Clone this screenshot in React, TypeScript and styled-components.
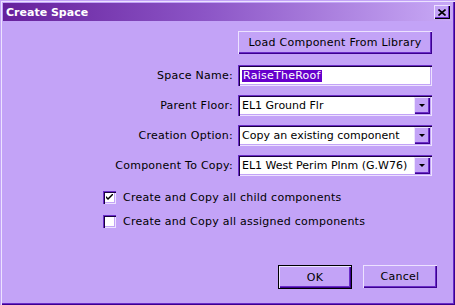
import React from "react";
import styled, { createGlobalStyle } from "styled-components";

const GlobalStyle = createGlobalStyle`
  html, body {
    margin: 0;
    padding: 0;
    background: #c3a3f7;
  }
  * {
    box-sizing: border-box;
  }
`;

const Window = styled.div`
  width: 455px;
  height: 305px;
  background: #c3a3f7;
  display: flex;
  flex-direction: column;
  font-family: "DejaVu Sans", Verdana, sans-serif;
  font-size: 11px;
  letter-spacing: 0.25px;
  color: #000;
  box-shadow: inset 1px 1px #c3a3f7, inset 2px 2px #ece2ff,
    inset -1px -1px #3c0090, inset -2px -2px #6a2cc8;
`;

const TitleBar = styled.div`
  margin: 3px 3px 0 3px;
  height: 18px;
  display: flex;
  align-items: center;
  justify-content: space-between;
  padding: 0 2px 0 3px;
  background: linear-gradient(to right, #66209c, #8c55c6 45%, #c8a9f6);
`;

const Title = styled.span`
  color: #fff;
  font-weight: bold;
  font-size: 11px;
  letter-spacing: 0;
`;

const CloseButton = styled.div`
  width: 16px;
  height: 14px;
  background: #c3a3f7;
  display: flex;
  align-items: center;
  justify-content: center;
  box-shadow: inset 1px 1px #ece2ff, inset -1px -1px #000,
    inset -2px -2px #6a2cc8;
`;

const Body = styled.div`
  flex: 1;
  display: flex;
  flex-direction: column;
  padding: 10px 18px 0 0;
`;

const Form = styled.div`
  display: grid;
  grid-template-columns: 1fr 194px;
  column-gap: 5px;
  row-gap: 9px;
  align-items: center;
  margin-right: 5px;
`;

const Label = styled.label`
  text-align: right;
  white-space: nowrap;
`;

const Button = styled.div<{ $default?: boolean; $width?: number }>`
  height: ${(p) => (p.$default ? 24 : 23)}px;
  width: ${(p) => (p.$width ? `${p.$width}px` : "auto")};
  display: flex;
  align-items: center;
  justify-content: center;
  background: #c3a3f7;
  white-space: nowrap;
  box-shadow: ${(p) =>
    p.$default
      ? "inset 1px 1px #000, inset -1px -1px #000, inset 2px 2px #ece2ff, inset -2px -2px #3c0090, inset -3px -3px #6a2cc8"
      : "inset 1px 1px #ece2ff, inset -1px -1px #3c0090, inset -2px -2px #6a2cc8"};
`;

const LoadButton = styled(Button)`
  grid-column: 2;
  margin-bottom: 2px;
`;

const Sunken = styled.div`
  height: 21px;
  background: #fff;
  display: flex;
  align-items: center;
  box-shadow: inset 1px 1px #6a2cc8, inset 2px 2px #1a0040,
    inset -1px -1px #ece2ff, inset -2px -2px #c3a3f7;
  padding: 0 2px 0 4px;
`;

const Selected = styled.span`
  background: #6600cc;
  color: #fff;
  padding: 0 1px;
  line-height: 12px;
`;

const ComboText = styled.span`
  flex: 1;
  white-space: nowrap;
  overflow: hidden;
  letter-spacing: 0;
`;

const ArrowButton = styled.div`
  width: 16px;
  height: 17px;
  background: #c3a3f7;
  display: flex;
  align-items: center;
  justify-content: center;
  box-shadow: inset 1px 1px #ece2ff, inset -1px -1px #3c0090,
    inset -2px -2px #6a2cc8;
`;

const Arrow = styled.div`
  width: 0;
  height: 0;
  border-left: 3px solid transparent;
  border-right: 3px solid transparent;
  border-top: 3px solid #000;
`;

const Checks = styled.div`
  display: flex;
  flex-direction: column;
  gap: 11px;
  padding-left: 103px;
  margin-top: 15px;
`;

const CheckRow = styled.div`
  display: flex;
  align-items: center;
  gap: 7px;
`;

const Box = styled.div`
  width: 13px;
  height: 13px;
  background: #fff;
  display: flex;
  align-items: center;
  justify-content: center;
  box-shadow: inset 1px 1px #6a2cc8, inset 2px 2px #1a0040,
    inset -1px -1px #ece2ff, inset -2px -2px #c3a3f7;
`;

const Footer = styled.div`
  margin-top: auto;
  margin-bottom: 16px;
  display: flex;
  justify-content: flex-end;
  align-items: flex-start;
  gap: 11px;
`;

const Combo = ({ value }: { value: string }) => (
  <Sunken>
    <ComboText>{value}</ComboText>
    <ArrowButton>
      <Arrow />
    </ArrowButton>
  </Sunken>
);

const Check = ({ checked, label }: { checked?: boolean; label: string }) => (
  <CheckRow>
    <Box>
      {checked && (
        <svg width="7" height="7" viewBox="0 0 7 7">
          <path d="M0 2 L0 4 L2 6 L7 1 L7 -1 L2 4 Z" fill="#000" />
        </svg>
      )}
    </Box>
    <span>{label}</span>
  </CheckRow>
);

export default function App() {
  return (
    <>
      <GlobalStyle />
      <Window>
        <TitleBar>
          <Title>Create Space</Title>
          <CloseButton>
            <svg width="8" height="7" viewBox="0 0 8 7">
              <path d="M0.5 0.5 L7.5 6.5 M7.5 0.5 L0.5 6.5" stroke="#000" strokeWidth="1.6" />
            </svg>
          </CloseButton>
        </TitleBar>
        <Body>
          <Form>
            <LoadButton>Load Component From Library</LoadButton>
            <Label>Space Name:</Label>
            <Sunken>
              <Selected>RaiseTheRoof</Selected>
            </Sunken>
            <Label>Parent Floor:</Label>
            <Combo value="EL1 Ground Flr" />
            <Label>Creation Option:</Label>
            <Combo value="Copy an existing component" />
            <Label>Component To Copy:</Label>
            <Combo value="EL1 West Perim Plnm (G.W76)" />
          </Form>
          <Checks>
            <Check checked label="Create and Copy all child components" />
            <Check label="Create and Copy all assigned components" />
          </Checks>
          <Footer>
            <Button $default $width={74}>OK</Button>
            <Button $width={74}>Cancel</Button>
          </Footer>
        </Body>
      </Window>
    </>
  );
}
